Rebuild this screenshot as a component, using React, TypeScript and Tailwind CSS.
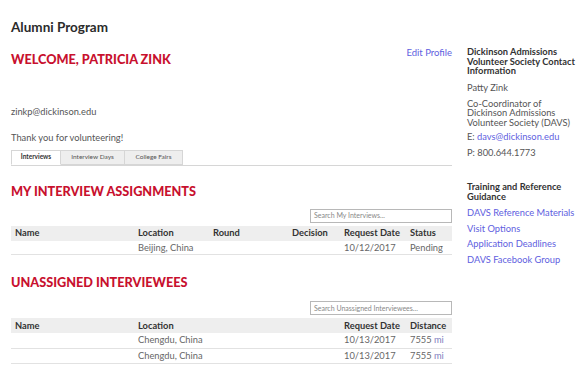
import React from "react";

const font = { fontFamily: "Lato, 'Open Sans', sans-serif" };

const assignments = [
  { name: "", location: "Beijing, China", round: "", decision: "", date: "10/12/2017", status: "Pending" },
];

const unassigned = [
  { name: "", location: "Chengdu, China", date: "10/13/2017", distance: "7555" },
  { name: "", location: "Chengdu, China", date: "10/13/2017", distance: "7555" },
];

function SectionTitle({ children }: { children: React.ReactNode }) {
  return <h2 className="text-[12.7px] font-black leading-none text-[#c8102e]">{children}</h2>;
}

function SearchBox({ placeholder }: { placeholder: string }) {
  return (
    <div className="flex justify-end">
      <div className="flex h-[14px] w-[142px] items-center border border-[#b8b8b8] bg-white px-[3px] text-[7px] text-[#888]">
        {placeholder}
      </div>
    </div>
  );
}

export default function App() {
  return (
    <div className="h-[378px] w-[585px] overflow-hidden bg-white text-[#555]" style={font}>
      <div className="flex gap-[15px] pl-[11px] pt-[21px]">
        {/* main column */}
        <div className="w-[441px]">
          <h1 className="text-[13.5px] font-bold leading-none text-[#2b2b2b]">Alumni Program</h1>

          <div className="mt-[18px] flex items-start justify-between">
            <SectionTitle>WELCOME, PATRICIA ZINK</SectionTitle>
            <a className="-mt-[5px] text-[9.5px] leading-none text-[#6060e0]">Edit Profile</a>
          </div>

          <p className="mt-[42px] text-[9.3px] leading-none text-[#555]">zinkp@dickinson.edu</p>
          <p className="mt-[16px] text-[9.3px] leading-none text-[#555]">Thank you for volunteering!</p>

          {/* tabs */}
          <div className="mt-[8px] flex border-b border-[#d6d6d6]">
            <div className="-mb-px flex h-[15px] w-[50px] items-center justify-center border border-b-white border-[#d6d6d6] bg-white text-[6.5px] font-bold text-[#333]">
              Interviews
            </div>
            <div className="flex h-[15px] w-[64px] items-center justify-center border-y border-r border-[#d6d6d6] bg-[#eeeeee] text-[6.5px] text-[#555]">
              Interview Days
            </div>
            <div className="flex h-[15px] w-[58px] items-center justify-center border-y border-r border-[#d6d6d6] bg-[#eeeeee] text-[6.5px] text-[#555]">
              College Fairs
            </div>
          </div>

          <div className="mt-[19px]">
            <SectionTitle>MY INTERVIEW ASSIGNMENTS</SectionTitle>
          </div>

          <div className="mt-[11px]">
            <SearchBox placeholder="Search My Interviews..." />
          </div>

          <table className="mt-[3px] w-full border-collapse text-[9.3px]">
            <thead>
              <tr className="h-[15px] bg-[#eeeeee] text-left text-[#333]">
                <th className="w-[127px] pl-[4px] font-bold">Name</th>
                <th className="w-[75px] font-bold">Location</th>
                <th className="w-[79px] font-bold">Round</th>
                <th className="w-[52px] font-bold">Decision</th>
                <th className="w-[66px] font-bold">Request Date</th>
                <th className="font-bold">Status</th>
              </tr>
            </thead>
            <tbody>
              {assignments.map((a, i) => (
                <tr key={i} className="h-[14px] border-b border-[#e2e2e2] text-[#666]">
                  <td className="pl-[4px]">{a.name}</td>
                  <td>{a.location}</td>
                  <td>{a.round}</td>
                  <td>{a.decision}</td>
                  <td>{a.date}</td>
                  <td>{a.status}</td>
                </tr>
              ))}
            </tbody>
          </table>

          <div className="mt-[21px]">
            <SectionTitle>UNASSIGNED INTERVIEWEES</SectionTitle>
          </div>

          <div className="mt-[12px]">
            <SearchBox placeholder="Search Unassigned Interviewees..." />
          </div>

          <table className="mt-[3px] w-full border-collapse text-[9.3px]">
            <thead>
              <tr className="h-[15px] bg-[#eeeeee] text-left text-[#333]">
                <th className="w-[127px] pl-[4px] font-bold">Name</th>
                <th className="w-[206px] font-bold">Location</th>
                <th className="w-[66px] font-bold">Request Date</th>
                <th className="font-bold">Distance</th>
              </tr>
            </thead>
            <tbody>
              {unassigned.map((u, i) => (
                <tr key={i} className="h-[15px] border-b border-[#e2e2e2] text-[#666]">
                  <td className="pl-[4px]">{u.name}</td>
                  <td>{u.location}</td>
                  <td>{u.date}</td>
                  <td>
                    {u.distance} <span className="text-[#8080c0]">mi</span>
                  </td>
                </tr>
              ))}
            </tbody>
          </table>
        </div>

        {/* sidebar */}
        <aside className="w-[113px] pt-[26px] text-[9.3px]">
          <h3 className="font-bold leading-[9.5px] text-[#333]">
            Dickinson Admissions Volunteer Society Contact Information
          </h3>
          <p className="mt-[7px] leading-[10px]">Patty Zink</p>
          <p className="mt-[6px] leading-[9.5px]">Co-Coordinator of Dickinson Admissions Volunteer Society (DAVS)</p>
          <p className="mt-[5px] leading-[10px]">
            E: <a className="text-[#6060e0]">davs@dickinson.edu</a>
          </p>
          <p className="mt-[6px] leading-[10px]">P: 800.644.1773</p>

          <h3 className="mt-[24px] font-bold leading-[9.5px] text-[#333]">Training and Reference Guidance</h3>
          <ul className="mt-[7px] flex flex-col gap-[5.5px] leading-[10px] text-[#6060e0]">
            <li>DAVS Reference Materials</li>
            <li>Visit Options</li>
            <li>Application Deadlines</li>
            <li>DAVS Facebook Group</li>
          </ul>
        </aside>
      </div>
    </div>
  );
}
